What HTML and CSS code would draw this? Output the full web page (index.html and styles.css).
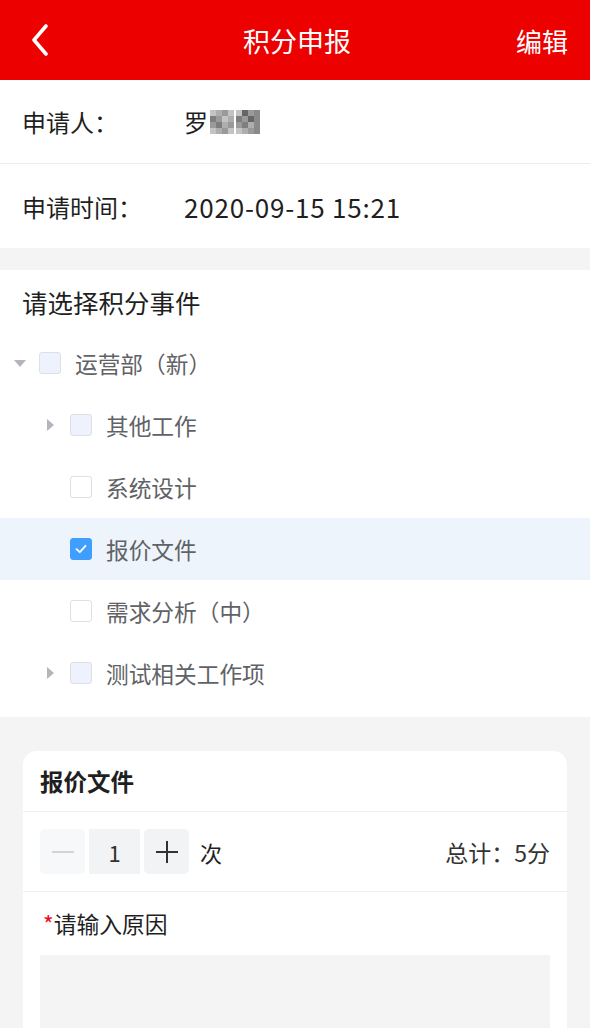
FILE: index.html
```html
<!DOCTYPE html>
<html lang="zh-CN">
<head>
    <meta charset="UTF-8">
    <meta name="viewport" content="width=device-width, initial-scale=1.0">
    <title>积分申报</title>
    <link rel="stylesheet" href="styles.css">
</head>
<body>
    <header class="topbar">
        <span class="back">
            <svg width="20" height="32" viewBox="0 0 20 32"><path d="M16 2 L4 16 L16 30" fill="none" stroke="#fff" stroke-width="3.6" stroke-linecap="round" stroke-linejoin="round"/></svg>
        </span>
        <h1>积分申报</h1>
        <span class="edit">编辑</span>
    </header>

    <div class="info">
        <div class="info-row">
            <span class="label">申请人：</span>
            <span class="value">罗<span class="mosaic"><i></i><i></i><i></i><i></i><i></i><i></i><i></i><i></i><i></i><i></i><i></i><i></i><i></i><i></i><i></i><i></i></span><span class="mosaic alt"><i></i><i></i><i></i><i></i><i></i><i></i><i></i><i></i><i></i><i></i><i></i><i></i><i></i><i></i><i></i><i></i></span></span>
        </div>
        <div class="info-row">
            <span class="label">申请时间：</span>
            <span class="value date">2020-09-15 15:21</span>
        </div>
    </div>

    <div class="events">
        <div class="events-title">请选择积分事件</div>
        <div class="tree">
            <div class="node">
                <span class="caret down"></span>
                <span class="check parent"></span>
                <span class="text">运营部（新）</span>
            </div>
            <div class="node level1">
                <span class="caret right"></span>
                <span class="check parent"></span>
                <span class="text">其他工作</span>
            </div>
            <div class="node level1">
                <span class="caret none"></span>
                <span class="check"></span>
                <span class="text">系统设计</span>
            </div>
            <div class="node level1 current">
                <span class="caret none"></span>
                <span class="check checked">
                    <svg width="14" height="14" viewBox="0 0 14 14"><path d="M2.5 7.2 L5.8 10.2 L11.5 3.8" fill="none" stroke="#fff" stroke-width="1.8" stroke-linecap="round" stroke-linejoin="round"/></svg>
                </span>
                <span class="text">报价文件</span>
            </div>
            <div class="node level1">
                <span class="caret none"></span>
                <span class="check"></span>
                <span class="text">需求分析（中）</span>
            </div>
            <div class="node level1">
                <span class="caret right"></span>
                <span class="check parent"></span>
                <span class="text">测试相关工作项</span>
            </div>
        </div>
    </div>

    <div class="card">
        <div class="card-title">报价文件</div>
        <div class="card-row">
            <div class="stepper">
                <span class="step minus"></span>
                <span class="step-value">1</span>
                <span class="step plus"></span>
                <span class="unit">次</span>
            </div>
            <span class="total">总计：5分</span>
        </div>
        <div class="reason">
            <div class="reason-label"><span class="star">*</span>请输入原因</div>
            <div class="reason-input"></div>
        </div>
    </div>
</body>
</html>
```

FILE: styles.css
```css
body {
    margin: 0;
    background: #f4f4f4;
    font-family: "Noto Sans CJK SC", "Noto Sans", sans-serif;
    color: #1f1f1f;
    height: 1028px;
    overflow: hidden;
}

.topbar {
    height: 80px;
    background: #ec0000;
    color: #fff;
    display: flex;
    align-items: center;
    justify-content: space-between;
    padding: 0 22px 0 30px;
}

.topbar h1 {
    margin: 0;
    font-size: 27px;
    font-weight: 400;
    flex: 1;
    text-align: center;
    padding-left: 28px;
}

.back {
    display: flex;
    width: 20px;
}

.edit {
    font-size: 26px;
}

.info {
    background: #fff;
}

.info-row {
    height: 83px;
    display: flex;
    align-items: center;
    padding-left: 22px;
    font-size: 24px;
    border-bottom: 1px solid #ececec;
}

.info-row:last-child {
    height: 84px;
    border-bottom: none;
}

.label {
    width: 162px;
}

.value {
    display: flex;
    align-items: center;
}

.date {
    font-size: 26px;
    letter-spacing: 0.8px;
}

.mosaic {
    display: inline-grid;
    grid-template-columns: repeat(4, 6px);
    grid-template-rows: repeat(4, 6px);
    margin-left: 2px;
    filter: blur(0.6px);
}

.mosaic i:nth-child(3n) { background: #9a9a9a; }
.mosaic i:nth-child(3n+1) { background: #c4c4c4; }
.mosaic i:nth-child(3n+2) { background: #aeaeae; }
.mosaic i:nth-child(5), .mosaic i:nth-child(10) { background: #7e7e7e; }
.mosaic.alt i:nth-child(4n) { background: #8a8a8a; }
.mosaic.alt i:nth-child(2), .mosaic.alt i:nth-child(7) { background: #666; }

.events {
    margin-top: 22px;
    background: #fff;
    padding-bottom: 13px;
}

.events-title {
    height: 62px;
    display: flex;
    align-items: center;
    padding-left: 22px;
    font-size: 25.5px;
}

.node {
    height: 62px;
    display: flex;
    align-items: center;
    padding-left: 14px;
    font-size: 22.7px;
    color: #606266;
}

.node.level1 {
    padding-left: 45px;
}

.node.current {
    background: #eef4fc;
}

.caret {
    width: 25px;
    height: 12px;
    display: flex;
    align-items: center;
}

.caret.down::before {
    content: "";
    border-left: 6px solid transparent;
    border-right: 6px solid transparent;
    border-top: 7px solid #b3b6bd;
}

.caret.right::before {
    content: "";
    margin-left: 2px;
    border-top: 6px solid transparent;
    border-bottom: 6px solid transparent;
    border-left: 7px solid #b3b6bd;
}

.check {
    width: 20px;
    height: 20px;
    border: 1px solid #dcdfe6;
    border-radius: 3px;
    background: #fff;
    margin-right: 14px;
    display: flex;
    align-items: center;
    justify-content: center;
}

.check.parent {
    background: #edf2fc;
}

.check.checked {
    background: #409eff;
    border-color: #409eff;
}

.card {
    margin: 34px 23px 0;
    background: #fff;
    border-radius: 14px;
}

.card-title {
    height: 60px;
    display: flex;
    align-items: center;
    padding-left: 17px;
    font-size: 23.5px;
    font-weight: 700;
    border-bottom: 1px solid #efefef;
}

.card-row {
    height: 79px;
    display: flex;
    align-items: center;
    justify-content: space-between;
    padding: 0 17px;
    border-bottom: 1px solid #efefef;
}

.stepper {
    display: flex;
    align-items: center;
    gap: 4px;
}

.step {
    width: 45px;
    height: 45px;
    background: #f2f3f5;
    border-radius: 5px;
    position: relative;
}

.step.minus {
    background: #f7f8fa;
}

.step::before,
.plus::after {
    content: "";
    position: absolute;
    left: 12px;
    top: 22px;
    width: 22px;
    height: 2px;
    background: #323233;
}

.minus::before {
    background: #d3d4d7;
}

.plus::after {
    left: 22px;
    top: 12px;
    width: 2px;
    height: 22px;
}

.step-value {
    width: 51px;
    height: 45px;
    background: #f2f3f5;
    display: flex;
    align-items: center;
    justify-content: center;
    font-size: 22px;
    color: #323233;
}

.unit {
    margin-left: 7px;
    font-size: 22px;
}

.total {
    font-size: 23px;
    color: #333;
}

.reason {
    padding: 15px 17px 0;
}

.reason-label {
    font-size: 22.8px;
    padding-left: 3px;
}

.star {
    color: #ee0a24;
}

.reason-input {
    margin-top: 15px;
    height: 120px;
    background: #f4f4f4;
}
```
